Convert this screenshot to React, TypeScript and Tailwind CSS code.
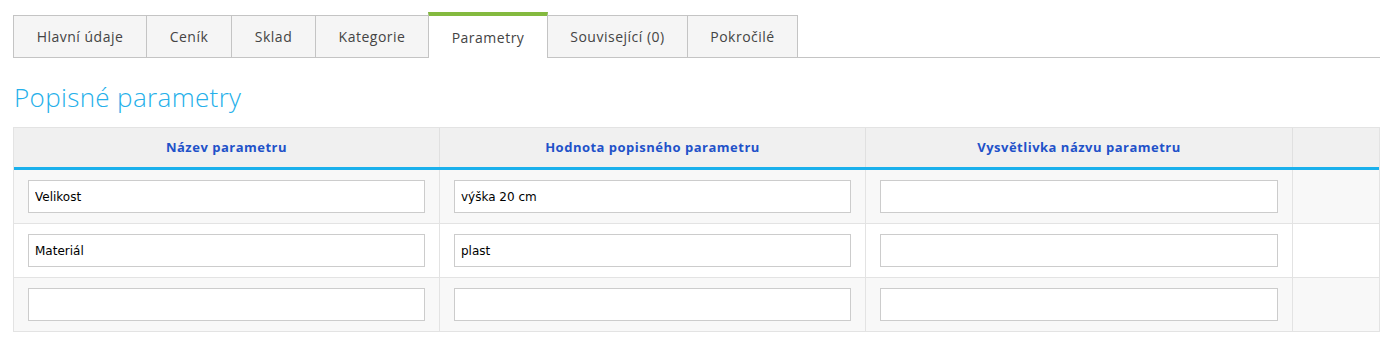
// Záložky produktu + tabulka popisných parametrů
const tabs = [
  { label: 'Hlavní údaje', w: 'w-[133px]' },
  { label: 'Ceník', w: 'w-[85px]' },
  { label: 'Sklad', w: 'w-[84px]' },
  { label: 'Kategorie', w: 'w-[113px]' },
  { label: 'Parametry', w: 'w-[120px]', active: true },
  { label: 'Související (0)', w: 'w-[139px]' },
  { label: 'Pokročilé', w: 'w-[111px]' },
];

const columns = ['Název parametru', 'Hodnota popisného parametru', 'Vysvětlivka názvu parametru', ''];

const rows = [
  { name: 'Velikost', value: 'výška 20 cm', note: '' },
  { name: 'Materiál', value: 'plast', note: '' },
  { name: '', value: '', note: '' },
];

const ParamInput = ({ value }: { value: string }) => (
  <input
    type="text"
    defaultValue={value}
    className="block h-[33px] w-full border border-[#cccccc] bg-white px-[6px] text-[12px] text-black outline-none"
    style={{ fontFamily: '"DejaVu Sans", Verdana, sans-serif' }}
  />
);

const App = () => {
  return (
    <div className="min-h-screen bg-white pl-[13px] pr-[20px] pt-[12px]" style={{ fontFamily: '"Open Sans", sans-serif' }}>
      <div className="flex items-end border-b border-[#c4c4c4]">
        {tabs.map((tab, i) =>
          tab.active ? (
            <div
              key={tab.label}
              className={`-mb-px flex h-[46px] ${tab.w} items-center justify-center border-x border-t-4 border-x-[#c4c4c4] border-t-[#84ba3f] bg-white pt-[1px] text-[14px] tracking-[0.5px] text-[#444]`}
            >
              {tab.label}
            </div>
          ) : (
            <div
              key={tab.label}
              className={`flex h-[42px] ${tab.w} items-center justify-center border-t border-[#c4c4c4] bg-[#f5f5f5] text-[14px] tracking-[0.5px] text-[#444] ${
                tabs[i - 1]?.active ? '' : 'border-l'
              } ${i === tabs.length - 1 ? 'border-r' : ''}`}
            >
              {tab.label}
            </div>
          )
        )}
      </div>

      <h2 className="mb-[15px] mt-[24px] pl-px text-[26px] font-light leading-[30px] tracking-[0.35px] text-[#25b0ea]">
        Popisné parametry
      </h2>

      <div className="border border-[#e3e3e3]">
        <div className="grid h-[42px] grid-cols-[426px_426px_427px_1fr] border-b-[3px] border-[#1ab0ec] bg-[#f0f0f0]">
          {columns.map((col, i) => (
            <div
              key={i}
              className={`flex items-center justify-center text-[13px] font-bold tracking-[0.5px] text-[#1f52c9] ${
                i < columns.length - 1 ? 'border-r border-[#e0e0e0]' : ''
              }`}
            >
              {col}
            </div>
          ))}
        </div>
        {rows.map((row, r) => (
          <div
            key={r}
            className={`grid grid-cols-[426px_426px_427px_1fr] ${r % 2 === 0 ? 'bg-[#f8f8f8]' : 'bg-white'} ${
              r < rows.length - 1 ? 'h-[54px] border-b border-[#e3e3e3]' : 'h-[53px]'
            }`}
          >
            <div className="flex items-center border-r border-[#e3e3e3] px-[14px]">
              <ParamInput value={row.name} />
            </div>
            <div className="flex items-center border-r border-[#e3e3e3] px-[14px]">
              <ParamInput value={row.value} />
            </div>
            <div className="flex items-center border-r border-[#e3e3e3] px-[14px]">
              <ParamInput value={row.note} />
            </div>
            <div />
          </div>
        ))}
      </div>
    </div>
  );
};

export default App;
